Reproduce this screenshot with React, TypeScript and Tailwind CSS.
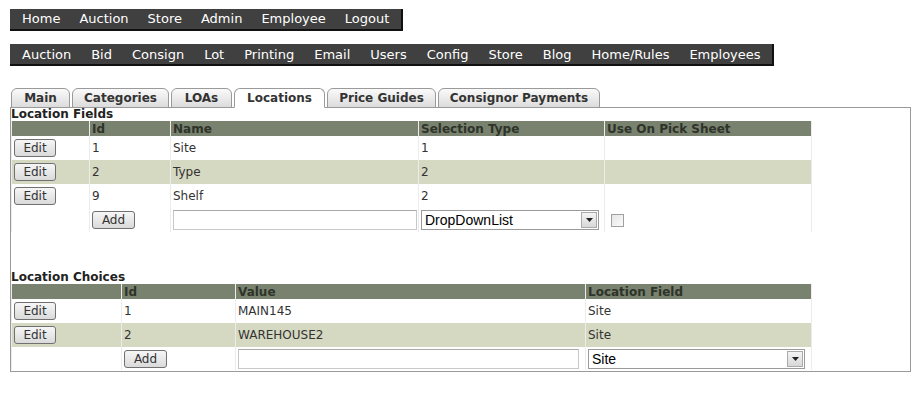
import React from "react";

const V = { fontFamily: '"DejaVu Sans", Verdana, sans-serif' };
const A = { fontFamily: '"Liberation Sans", Arial, sans-serif' };

function NavBar({ items, gap, pr }: { items: string[]; gap: number; pr: number }) {
  return (
    <div
      className="inline-flex items-center h-[22px] bg-[#404040] border-b-2 border-r-2 border-[#111] pl-[12px] text-white text-[13px]"
      style={{ ...V, gap, paddingRight: pr }}
    >
      {items.map((t) => (
        <span key={t} className="leading-none">
          {t}
        </span>
      ))}
    </div>
  );
}

function Btn({ label, w }: { label: string; w: number }) {
  return (
    <button
      className="h-[18px] border border-[#707070] rounded-[3px] bg-gradient-to-b from-[#f6f6f6] to-[#dadada] text-[12px] text-[#333] leading-none flex items-center justify-center"
      style={{ ...V, width: w }}
    >
      {label}
    </button>
  );
}

function Select({ value, w }: { value: string; w: number }) {
  return (
    <div
      className="h-[20px] border border-[#9a9a9a] bg-white flex items-center justify-between pl-[3px] pr-[1px] text-[14px] text-black"
      style={{ ...A, width: w }}
    >
      <span className="leading-none">{value}</span>
      <span className="w-[16px] h-[16px] border border-[#aaa] bg-gradient-to-b from-[#f4f4f4] to-[#d8d8d8] flex items-center justify-center">
        <svg width="7" height="4" viewBox="0 0 7 4">
          <path d="M0 0h7L3.5 4z" fill="#222" />
        </svg>
      </span>
    </div>
  );
}

function Input({ w }: { w: number }) {
  return (
    <div
      className="h-[20px] border border-[#c8c8c8] border-t-[#a9a9a9] bg-white"
      style={{ width: w }}
    />
  );
}

const cell = "border-x border-[#ececec] px-[2px] align-middle";

function Tab({ label, w, active }: { label: string; w: number; active?: boolean }) {
  return (
    <div
      className={
        "h-[20px] border border-[#9a9a9a] rounded-t-[6px] flex items-center justify-center text-[12px] font-bold text-[#333] leading-none " +
        (active
          ? "bg-white border-b-white relative z-10"
          : "bg-gradient-to-b from-[#fafafa] to-[#dcdcdc]")
      }
      style={{ ...V, width: w }}
    >
      {label}
    </div>
  );
}

export default function App() {
  const rows1 = [
    { id: "1", name: "Site", sel: "1" },
    { id: "2", name: "Type", sel: "2" },
    { id: "9", name: "Shelf", sel: "2" },
  ];
  const rows2 = [
    { id: "1", val: "MAIN145", lf: "Site" },
    { id: "2", val: "WAREHOUSE2", lf: "Site" },
  ];
  return (
    <div className="w-[917px] h-[399px] bg-white pl-[10px] pt-[6px]" style={V}>
      <NavBar items={["Home", "Auction", "Store", "Admin", "Employee", "Logout"]} gap={19} pr={12} />
      <div className="mt-[11px]">
        <NavBar
          items={[
            "Auction",
            "Bid",
            "Consign",
            "Lot",
            "Printing",
            "Email",
            "Users",
            "Config",
            "Store",
            "Blog",
            "Home/Rules",
            "Employees",
          ]}
          gap={20}
          pr={11}
        />
      </div>

      <div className="mt-[22px] flex items-end pl-[1px] gap-[2px]">
        <Tab label="Main" w={59} />
        <Tab label="Categories" w={97} />
        <Tab label="LOAs" w={61} />
        <Tab label="Locations" w={91} active />
        <Tab label="Price Guides" w={109} />
        <Tab label="Consignor Payments" w={162} />
      </div>
      <div className="w-[901px] h-[265px] border border-[#9a9a9a] -mt-[1px] text-[#333]">
        <div className="text-[12px] font-bold leading-[13px] text-[#222]">
          Location Fields
        </div>
        <table className="border-collapse text-[12px] table-fixed w-[800px]">
          <colgroup>
            <col style={{ width: 78 }} />
            <col style={{ width: 81 }} />
            <col style={{ width: 248 }} />
            <col style={{ width: 186 }} />
            <col style={{ width: 207 }} />
          </colgroup>
          <thead>
            <tr className="bg-[#78826f] h-[15px] text-[#2e3329] font-bold text-left leading-none">
              <th className={cell}></th>
              <th className={cell}>Id</th>
              <th className={cell}>Name</th>
              <th className={cell}>Selection Type</th>
              <th className={cell}>Use On Pick Sheet</th>
            </tr>
          </thead>
          <tbody>
            {rows1.map((r, i) => (
              <tr key={r.id} className={"h-[24px] " + (i % 2 === 1 ? "bg-[#d6d9c2]" : "bg-white")}>
                <td className={cell}>
                  <Btn label="Edit" w={42} />
                </td>
                <td className={cell}>{r.id}</td>
                <td className={cell}>{r.name}</td>
                <td className={cell}>{r.sel}</td>
                <td className={cell}></td>
              </tr>
            ))}
            <tr className="h-[24px]">
              <td className={cell}></td>
              <td className={cell}>
                <Btn label="Add" w={43} />
              </td>
              <td className={cell}>
                <Input w={244} />
              </td>
              <td className={cell}>
                <Select value="DropDownList" w={178} />
              </td>
              <td className={cell + " pl-[6px]"}>
                <div className="w-[13px] h-[13px] border border-[#a0a0a0] bg-gradient-to-br from-[#e6e6e6] to-[#fafafa]" />
              </td>
            </tr>
          </tbody>
        </table>

        <div className="text-[12px] font-bold leading-[13px] text-[#222] mt-[39px]">
          Location Choices
        </div>
        <table className="border-collapse text-[12px] table-fixed w-[800px]">
          <colgroup>
            <col style={{ width: 110 }} />
            <col style={{ width: 114 }} />
            <col style={{ width: 350 }} />
            <col style={{ width: 226 }} />
          </colgroup>
          <thead>
            <tr className="bg-[#78826f] h-[15px] text-[#2e3329] font-bold text-left leading-none">
              <th className={cell}></th>
              <th className={cell}>Id</th>
              <th className={cell}>Value</th>
              <th className={cell}>Location Field</th>
            </tr>
          </thead>
          <tbody>
            {rows2.map((r, i) => (
              <tr key={r.id} className={"h-[24px] " + (i % 2 === 1 ? "bg-[#d6d9c2]" : "bg-white")}>
                <td className={cell}>
                  <Btn label="Edit" w={42} />
                </td>
                <td className={cell}>{r.id}</td>
                <td className={cell}>{r.val}</td>
                <td className={cell}>{r.lf}</td>
              </tr>
            ))}
            <tr className="h-[23px]">
              <td className={cell}></td>
              <td className={cell}>
                <Btn label="Add" w={43} />
              </td>
              <td className={cell}>
                <Input w={341} />
              </td>
              <td className={cell}>
                <Select value="Site" w={217} />
              </td>
            </tr>
          </tbody>
        </table>
      </div>
    </div>
  );
}
